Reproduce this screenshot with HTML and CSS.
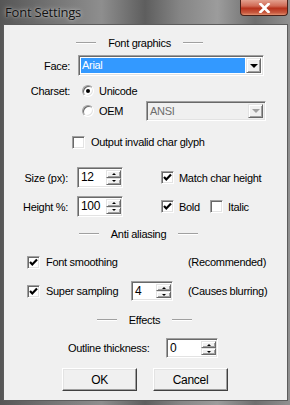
FILE: index.html
```html
<!DOCTYPE html>
<html lang="en">

<head>
  <meta charset="UTF-8">
  <title>Font Settings</title>
  <link rel="stylesheet" href="styles.css">
</head>

<body>
  <div class="window">
    <div class="titlebar">
      <span class="title">Font Settings</span>
      <span class="close">
        <svg width="13" height="10" viewBox="0 0 13 10"><path d="M2.5 1 L10.5 9 M10.5 1 L2.5 9" stroke="#fff" stroke-width="2.6" stroke-linecap="square"/></svg>
      </span>
    </div>
    <div class="client">
      <div class="heading h-font"><span class="rule"></span><span>Font graphics</span><span class="rule"></span></div>

      <div class="row r-face">
        <span class="lbl">Face:</span>
        <div class="combo face-combo">
          <span class="combo-val selected">Arial</span>
          <span class="btn drop"><i class="tri-down"></i></span>
        </div>
      </div>

      <div class="row r-charset">
        <span class="lbl">Charset:</span>
        <span class="radio checked"></span>
        <span class="opt">Unicode</span>
      </div>

      <div class="row r-oem">
        <span class="radio"></span>
        <span class="opt oem">OEM</span>
        <div class="combo ansi-combo disabled">
          <span class="combo-val">ANSI</span>
          <span class="btn drop"><i class="tri-down"></i></span>
        </div>
      </div>

      <div class="row r-invalid">
        <span class="check"></span>
        <span class="opt">Output invalid char glyph</span>
      </div>

      <div class="row r-size">
        <span class="lbl lbl-num">Size (px):</span>
        <div class="spin num-spin">
          <span class="spin-val">12</span>
          <span class="spin-btns"><span class="btn"><i class="tri-up"></i></span><span class="btn"><i class="tri-dn"></i></span></span>
        </div>
        <span class="check checked match"><svg width="9" height="9" viewBox="0 0 9 9"><path d="M1 4 L3.3 6.5 L8 1.5" fill="none" stroke="#000" stroke-width="2.2"/></svg></span>
        <span class="opt">Match char height</span>
      </div>

      <div class="row r-height">
        <span class="lbl lbl-num">Height %:</span>
        <div class="spin num-spin">
          <span class="spin-val">100</span>
          <span class="spin-btns"><span class="btn"><i class="tri-up"></i></span><span class="btn"><i class="tri-dn"></i></span></span>
        </div>
        <span class="check checked match"><svg width="9" height="9" viewBox="0 0 9 9"><path d="M1 4 L3.3 6.5 L8 1.5" fill="none" stroke="#000" stroke-width="2.2"/></svg></span>
        <span class="opt bold">Bold</span>
        <span class="check"></span>
        <span class="opt">Italic</span>
      </div>

      <div class="heading h-anti"><span class="rule"></span><span>Anti aliasing</span><span class="rule"></span></div>

      <div class="row r-smooth">
        <span class="check checked"><svg width="9" height="9" viewBox="0 0 9 9"><path d="M1 4 L3.3 6.5 L8 1.5" fill="none" stroke="#000" stroke-width="2.2"/></svg></span>
        <span class="opt smooth">Font smoothing</span>
        <span class="note">(Recommended)</span>
      </div>

      <div class="row r-super">
        <span class="check checked"><svg width="9" height="9" viewBox="0 0 9 9"><path d="M1 4 L3.3 6.5 L8 1.5" fill="none" stroke="#000" stroke-width="2.2"/></svg></span>
        <span class="opt super">Super sampling</span>
        <div class="spin super-spin">
          <span class="spin-val">4</span>
          <span class="spin-btns"><span class="btn"><i class="tri-up"></i></span><span class="btn"><i class="tri-dn"></i></span></span>
        </div>
        <span class="note blur">(Causes blurring)</span>
      </div>

      <div class="heading h-effects"><span class="rule"></span><span>Effects</span><span class="rule"></span></div>

      <div class="row r-outline">
        <span class="outline-lbl">Outline thickness:</span>
        <div class="spin outline-spin">
          <span class="spin-val">0</span>
          <span class="spin-btns"><span class="btn"><i class="tri-up"></i></span><span class="btn"><i class="tri-dn"></i></span></span>
        </div>
      </div>

      <div class="row r-buttons">
        <span class="push">OK</span>
        <span class="push cancel">Cancel</span>
      </div>
    </div>
  </div>
</body>

</html>
```

FILE: styles.css
```css
html,
body {
  margin: 0;
  padding: 0;
}

body {
  width: 290px;
  height: 405px;
  overflow: hidden;
  font-family: "Liberation Sans", Arial, sans-serif;
  font-size: 11px;
  letter-spacing: -0.3px;
  color: #000;
}

.window {
  width: 290px;
  height: 405px;
  display: flex;
  flex-direction: column;
  background: linear-gradient(90deg, #565656 0%, #747474 18%, #8e8e8e 35%, #5e5e5e 50%, #858585 62%, #9c9c9c 75%, #6e6e6e 88%, #909090 100%);
}

/* title bar */
.titlebar {
  height: 24px;
  flex: none;
  display: flex;
  justify-content: space-between;
  align-items: flex-start;
}

.title {
  margin: 3px 0 0 5px;
  font-family: "Open Sans", "Noto Sans", sans-serif;
  font-size: 13px;
  letter-spacing: -0.2px;
  color: #111;
  text-shadow: 0 0 5px rgba(255, 255, 255, 0.6), 0 0 2px rgba(255, 255, 255, 0.4);
}

.close {
  width: 46px;
  height: 15px;
  margin-right: 2px;
  display: flex;
  justify-content: center;
  align-items: center;
  border: 1px solid #4a2018;
  border-top: none;
  border-radius: 0 0 4px 4px;
  background: linear-gradient(#e3a08e 0%, #d06a55 40%, #b7321c 55%, #c85a40 85%, #e2906f 100%);
}

/* client area */
.client {
  margin: 0 2px 4px 3px;
  height: 377px;
  box-sizing: border-box;
  border: 1px solid #5c5c5c;
  background-color: #f0f0f0;
}

.row {
  display: flex;
  align-items: center;
}

/* group headings */
.heading {
  height: 14px;
  display: flex;
  justify-content: center;
  align-items: center;
  gap: 12px;
}

.rule {
  width: 20px;
  height: 1px;
  background-color: #a0a0a0;
  border-bottom: 1px solid #fff;
}

.h-font {
  margin-top: 11px;
  padding-right: 12px;
}

.h-anti {
  margin-top: 10px;
  padding-right: 14px;
}

.h-effects {
  margin-top: 12px;
  padding-right: 2px;
}

.lbl {
  width: 66px;
  text-align: right;
}

.lbl-num {
  width: 64px;
}

/* 3d helpers */
.combo,
.spin {
  box-sizing: border-box;
  display: flex;
  border: 1px solid;
  border-color: #a0a0a0 #fff #fff #a0a0a0;
  box-shadow: inset 1px 1px #696969, inset -1px -1px #e3e3e3;
  background-color: #fff;
  padding: 2px;
}

.btn {
  box-sizing: border-box;
  display: flex;
  justify-content: center;
  align-items: center;
  background-color: #f0f0f0;
  border: 1px solid;
  border-color: #e3e3e3 #696969 #696969 #e3e3e3;
  box-shadow: inset 1px 1px #fff, inset -1px -1px #a0a0a0;
}

.tri-down {
  width: 0;
  height: 0;
  border-left: 4px solid transparent;
  border-right: 4px solid transparent;
  border-top: 4px solid #000;
}

.tri-up,
.tri-dn {
  width: 0;
  height: 0;
  border-left: 2px solid transparent;
  border-right: 2px solid transparent;
}

.tri-up {
  border-bottom: 2px solid #000;
}

.tri-dn {
  border-top: 2px solid #000;
}

/* face */
.r-face {
  margin-top: 5px;
}

.combo {
  height: 21px;
}

.face-combo {
  width: 186px;
  margin-left: 8px;
}

.combo-val {
  flex: 1;
  line-height: 15px;
  padding-left: 1px;
}

.combo-val.selected {
  background-color: #3399ff;
  color: #fff;
}

.drop {
  width: 15px;
  height: 15px;
  margin-left: 1px;
}

.combo.disabled {
  background-color: #f0f0f0;
  color: #6d6d6d;
}

.combo.disabled .tri-down {
  border-top-color: #a0a0a0;
}

.ansi-combo {
  width: 120px;
  height: 20px;
}

.ansi-combo .drop {
  height: 14px;
}

/* radio & check */
.radio {
  box-sizing: border-box;
  width: 12px;
  height: 12px;
  border-radius: 50%;
  border: 1px solid;
  border-color: #a0a0a0 #fff #fff #a0a0a0;
  box-shadow: inset 1px 1px #696969, inset -1px -1px #e3e3e3;
  background-color: #fff;
  display: flex;
  justify-content: center;
  align-items: center;
}

.radio.checked::after {
  content: "";
  width: 4px;
  height: 4px;
  border-radius: 50%;
  background-color: #000;
}

.check {
  box-sizing: border-box;
  width: 13px;
  height: 13px;
  border: 1px solid;
  border-color: #a0a0a0 #fff #fff #a0a0a0;
  box-shadow: inset 1px 1px #696969, inset -1px -1px #e3e3e3;
  background-color: #fff;
  display: flex;
  justify-content: center;
  align-items: center;
}

.opt {
  margin-left: 5px;
}

.r-charset {
  margin-top: 5px;
  height: 20px;
}

.r-charset .radio {
  margin-left: 12px;
}

.r-oem {
  height: 20px;
  padding-left: 78px;
}

.oem {
  width: 47px;
}

.r-invalid {
  margin-top: 14px;
  height: 14px;
  padding-left: 68px;
}

.r-invalid .opt {
  margin-left: 6px;
}

/* size / height */
.r-size {
  margin-top: 18px;
}

.r-height {
  margin-top: 8px;
}

.spin {
  height: 21px;
  padding: 2px 1px 2px 2px;
}

.spin-val {
  flex: 1;
  font-size: 12px;
  line-height: 15px;
  padding-left: 1px;
}

.spin-btns {
  width: 15px;
  display: flex;
  flex-direction: column;
}

.spin-btns .btn {
  flex: 1;
}

.num-spin {
  width: 46px;
  margin-left: 9px;
}

.match {
  margin-left: 38px;
}

.bold {
  width: 31px;
}

/* anti aliasing */
.r-smooth {
  margin-top: 14px;
  height: 14px;
  padding-left: 23px;
}

.r-super {
  margin-top: 12px;
  padding-left: 23px;
}

.r-smooth .opt,
.r-super .opt {
  margin-left: 6px;
}

.smooth {
  width: 142px;
}

.super {
  width: 85px;
}

.super-spin {
  width: 42px;
  height: 20px;
}

.blur {
  margin-left: 15px;
}

/* effects */
.r-outline {
  margin-top: 11px;
  padding-left: 64px;
}

.outline-lbl {
  width: 98px;
}

.outline-spin {
  width: 52px;
  height: 20px;
}

.r-buttons {
  margin-top: 10px;
  padding-left: 58px;
  gap: 16px;
}

.push {
  box-sizing: border-box;
  width: 75px;
  height: 23px;
  display: flex;
  justify-content: center;
  align-items: center;
  font-size: 12px;
  background-color: #f0f0f0;
  border: 1px solid;
  border-color: #fff #404040 #404040 #fff;
  box-shadow: inset -1px -1px #a0a0a0, inset 1px 1px #e3e3e3;
}
```
